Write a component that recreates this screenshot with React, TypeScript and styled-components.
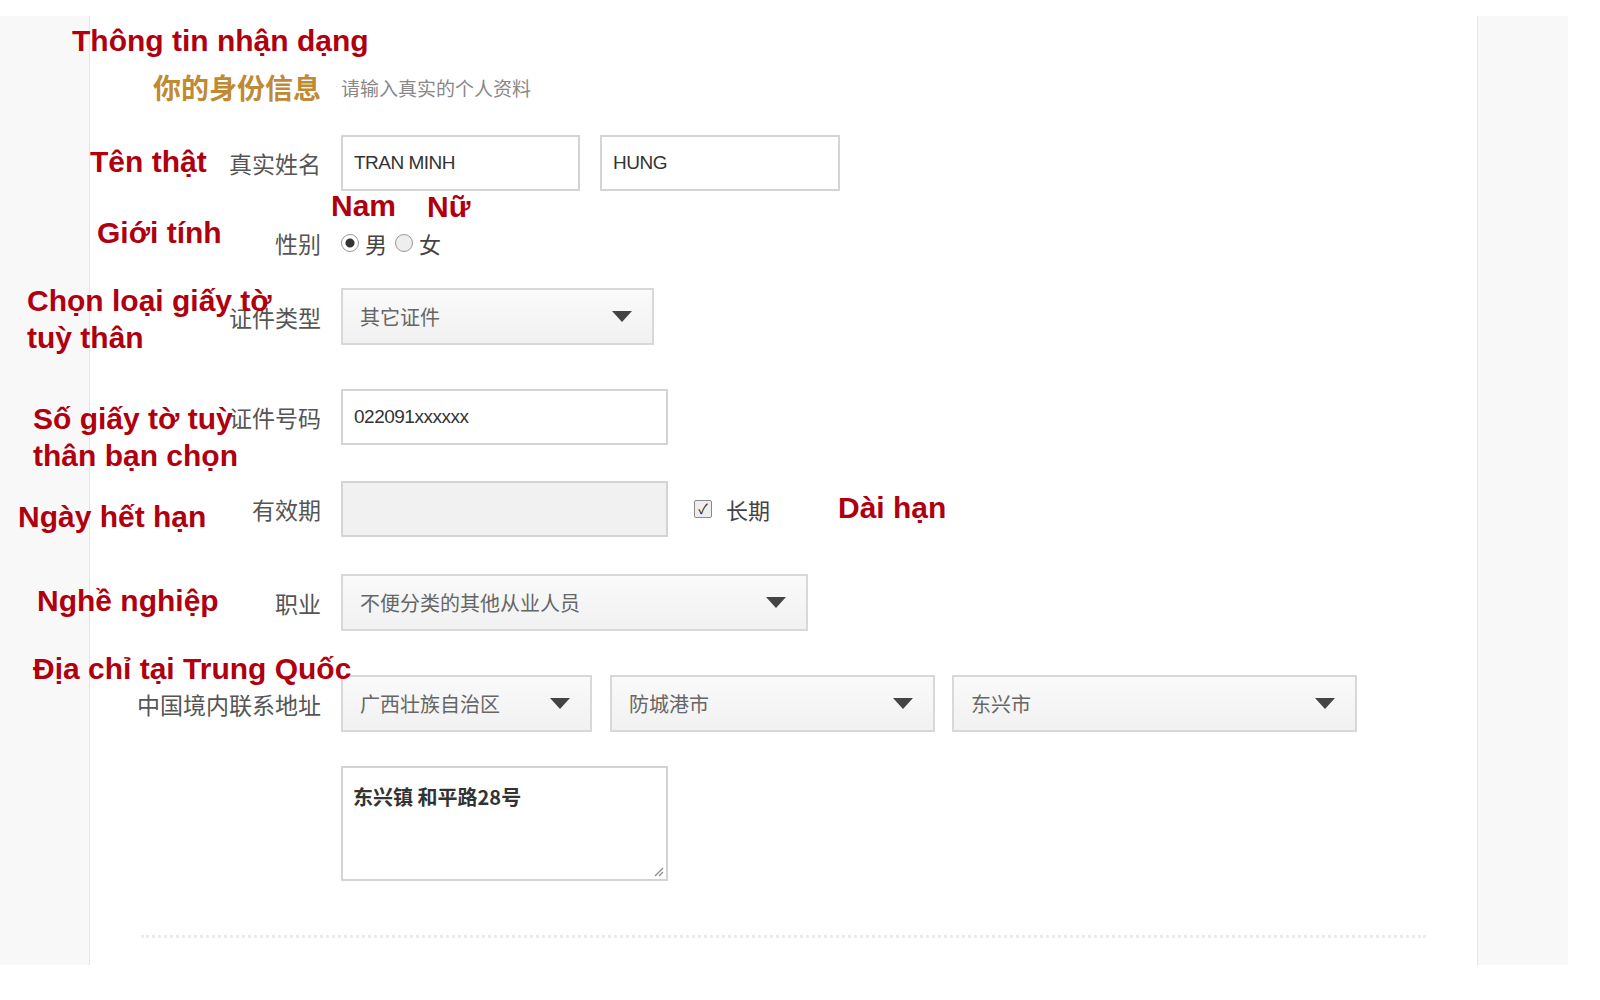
import React from "react";
import styled, { createGlobalStyle } from "styled-components";

const Global = createGlobalStyle`
  html, body { margin: 0; padding: 0; background: #fff; }
  body { font-family: "Liberation Sans", "Noto Sans CJK SC", sans-serif; }
`;

const Page = styled.div`
  position: relative;
  width: 1600px;
  height: 1000px;
  padding-top: 16px;
  box-sizing: border-box;
  overflow: hidden;
`;

const Frame = styled.div`
  display: flex;
  width: 1568px;
  height: 949px;
`;

const Side = styled.div<{ $w: number; $border: string }>`
  width: ${(p) => p.$w}px;
  background: #f8f8f8;
  ${(p) => p.$border}: 1px solid #e6e6e6;
  flex-shrink: 0;
`;

const Content = styled.div`
  flex: 1;
  background: #fff;
  display: flex;
  flex-direction: column;
`;

const Row = styled.div<{ $top: number; $h?: number }>`
  display: grid;
  grid-template-columns: 231px auto;
  column-gap: 20px;
  align-items: center;
  margin-top: ${(p) => p.$top}px;
  height: ${(p) => p.$h ?? 56}px;
`;

const Label = styled.div`
  text-align: right;
  font-size: 23px;
  color: #555;
  font-family: "Noto Sans CJK SC", sans-serif;
  white-space: nowrap;
`;

const Title = styled.div`
  text-align: right;
  font-size: 28px;
  font-weight: 700;
  color: #c08a35;
  font-family: "Noto Sans CJK SC", sans-serif;
`;

const Hint = styled.div`
  font-size: 19px;
  color: #888;
  font-family: "Noto Sans CJK SC", sans-serif;
`;

const Fields = styled.div`
  display: flex;
  align-items: center;
`;

const Input = styled.div<{ $w: number; $gray?: boolean; $ml?: number }>`
  width: ${(p) => p.$w}px;
  height: 56px;
  box-sizing: border-box;
  border: 2px solid #d4d4d4;
  background: ${(p) => (p.$gray ? "#f1f1f1" : "#fff")};
  margin-left: ${(p) => p.$ml ?? 0}px;
  display: flex;
  align-items: center;
  padding-left: 11px;
  font-size: 19px;
  color: #333;
  letter-spacing: -0.5px;
`;

const Select = styled.div<{ $w: number; $ml?: number }>`
  width: ${(p) => p.$w}px;
  height: 57px;
  box-sizing: border-box;
  border: 2px solid #d8d8d8;
  background: linear-gradient(#fafafa, #f1f1f1);
  margin-left: ${(p) => p.$ml ?? 0}px;
  display: flex;
  align-items: center;
  justify-content: space-between;
  padding: 0 20px 0 17px;
  font-size: 20px;
  color: #666;
  font-family: "Noto Sans CJK SC", sans-serif;
`;

const Caret = styled.span`
  width: 0;
  height: 0;
  border-left: 10px solid transparent;
  border-right: 10px solid transparent;
  border-top: 11px solid #444;
`;

const Radio = styled.span<{ $on?: boolean }>`
  width: 18px;
  height: 18px;
  border-radius: 50%;
  border: 1px solid #999;
  box-sizing: border-box;
  background: ${(p) => (p.$on ? "radial-gradient(#333 0 4px, #fff 5px)" : "#eee")};
  margin-right: 6px;
`;

const Opt = styled.span`
  font-size: 22px;
  color: #444;
  margin-right: 8px;
  font-family: "Noto Sans CJK SC", sans-serif;
`;

const Check = styled.span`
  width: 16px;
  height: 16px;
  border: 1px solid #888;
  border-radius: 2px;
  background: #eee;
  margin: 0 14px 0 26px;
  display: flex;
  align-items: center;
  justify-content: center;
  font-size: 14px;
  line-height: 1;
  color: #222;
`;

const TextArea = styled.div`
  width: 327px;
  height: 115px;
  box-sizing: border-box;
  border: 2px solid #d4d4d4;
  padding: 14px 10px;
  font-size: 20px;
  font-weight: 700;
  color: #333;
  font-family: "Noto Sans CJK SC", sans-serif;
  position: relative;
`;

const Grip = styled.svg`
  position: absolute;
  right: 2px;
  bottom: 2px;
`;

const Dotted = styled.div`
  margin: 54px 0 0 51px;
  width: 1285px;
  border-top: 3px dotted #ececec;
`;

const Note = styled.div<{ $x: number; $y: number }>`
  position: absolute;
  left: ${(p) => p.$x}px;
  top: ${(p) => p.$y}px;
  font-family: "Liberation Sans", Arial, sans-serif;
  font-weight: 700;
  font-size: 30px;
  line-height: 37px;
  color: #b0000f;
  white-space: pre;
`;

export default function App() {
  return (
    <>
      <Global />
      <Page>
        <Frame>
          <Side $w={89} $border="border-right" />
          <Content>
            <Row $top={48} $h={46}>
              <Title>你的身份信息</Title>
              <Hint>请输入真实的个人资料</Hint>
            </Row>
            <Row $top={25}>
              <Label>真实姓名</Label>
              <Fields>
                <Input $w={239}>TRAN MINH</Input>
                <Input $w={240} $ml={20}>HUNG</Input>
              </Fields>
            </Row>
            <Row $top={35} $h={28}>
              <Label>性别</Label>
              <Fields>
                <Radio $on />
                <Opt>男</Opt>
                <Radio />
                <Opt>女</Opt>
              </Fields>
            </Row>
            <Row $top={34}>
              <Label>证件类型</Label>
              <Fields>
                <Select $w={313}>其它证件<Caret /></Select>
              </Fields>
            </Row>
            <Row $top={45}>
              <Label>证件号码</Label>
              <Fields>
                <Input $w={327}>022091xxxxxx</Input>
              </Fields>
            </Row>
            <Row $top={36}>
              <Label>有效期</Label>
              <Fields>
                <Input $w={327} $gray />
                <Check>✓</Check>
                <Opt>长期</Opt>
              </Fields>
            </Row>
            <Row $top={37}>
              <Label>职业</Label>
              <Fields>
                <Select $w={467}>不便分类的其他从业人员<Caret /></Select>
              </Fields>
            </Row>
            <Row $top={45}>
              <Label>中国境内联系地址</Label>
              <Fields>
                <Select $w={251}>广西壮族自治区<Caret /></Select>
                <Select $w={325} $ml={18}>防城港市<Caret /></Select>
                <Select $w={405} $ml={17}>东兴市<Caret /></Select>
              </Fields>
            </Row>
            <Row $top={35} $h={115}>
              <span />
              <TextArea>
                东兴镇 和平路28号
                <Grip width="12" height="12" viewBox="0 0 12 12">
                  <path d="M11 3 L3 11 M11 7 L7 11" stroke="#888" strokeWidth="1.2" />
                </Grip>
              </TextArea>
            </Row>
            <Dotted />
          </Content>
          <Side $w={90} $border="border-left" />
        </Frame>
        <Note $x={72} $y={22}>Thông tin nhận dạng</Note>
        <Note $x={90} $y={143}>Tên thật</Note>
        <Note $x={331} $y={187}>Nam</Note>
        <Note $x={427} $y={188}>Nữ</Note>
        <Note $x={97} $y={214}>Giới tính</Note>
        <Note $x={27} $y={282}>{"Chọn loại giấy tờ\ntuỳ thân"}</Note>
        <Note $x={33} $y={400}>{"Số giấy tờ tuỳ\nthân bạn chọn"}</Note>
        <Note $x={18} $y={498}>Ngày hết hạn</Note>
        <Note $x={838} $y={489}>Dài hạn</Note>
        <Note $x={37} $y={582}>Nghề nghiệp</Note>
        <Note $x={33} $y={650}>Địa chỉ tại Trung Quốc</Note>
      </Page>
    </>
  );
}
